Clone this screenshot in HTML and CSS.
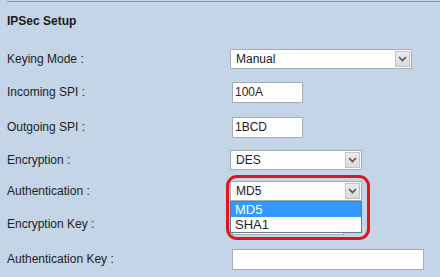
FILE: index.html
```html
<!DOCTYPE html>
<html lang="en">
<head>
  <meta charset="UTF-8" />
  <title>IPSec Setup</title>
  <link rel="stylesheet" href="styles.css">
</head>
<body>
  <div class="panel">
    <h3 class="title">IPSec Setup</h3>

    <div class="row first">
      <span class="label">Keying Mode :</span>
      <div class="select wide">
        <span class="select-text">Manual</span>
        <span class="select-btn"><svg width="9" height="6" viewBox="0 0 9 6"><path d="M1 1l3.5 3.5L8 1" fill="none" stroke="#555" stroke-width="1.6"/></svg></span>
      </div>
    </div>

    <div class="row">
      <span class="label">Incoming SPI :</span>
      <input class="text short" type="text" value="100A" />
    </div>

    <div class="row gap-lg">
      <span class="label">Outgoing SPI :</span>
      <input class="text short" type="text" value="1BCD" />
    </div>

    <div class="row">
      <span class="label">Encryption :</span>
      <div class="select mid">
        <span class="select-text">DES</span>
        <span class="select-btn"><svg width="9" height="6" viewBox="0 0 9 6"><path d="M1 1l3.5 3.5L8 1" fill="none" stroke="#555" stroke-width="1.6"/></svg></span>
      </div>
    </div>

    <div class="row gap-sm">
      <span class="label">Authentication :</span>
      <div class="field-wrap">
        <div class="select mid">
          <span class="select-text">MD5</span>
          <span class="select-btn"><svg width="9" height="6" viewBox="0 0 9 6"><path d="M1 1l3.5 3.5L8 1" fill="none" stroke="#555" stroke-width="1.6"/></svg></span>
        </div>
        <ul class="dropdown">
          <li class="active">MD5</li>
          <li>SHA1</li>
        </ul>
        <div class="ring"></div>
      </div>
    </div>

    <div class="row">
      <span class="label">Encryption Key :</span>
      <input class="text key" type="text" />
    </div>

    <div class="row gap-lg">
      <span class="label">Authentication Key :</span>
      <input class="text long" type="text" />
    </div>
  </div>
</body>
</html>
```

FILE: styles.css
```css
body {
  margin: 0;
  background: #c3d5e6;
  font-family: "Liberation Sans", Arial, sans-serif;
  font-size: 12px;
  color: #1e1e1e;
}
.panel {
  margin: 1px 0 0 7px;
  border-top: 1px solid #8e9aa6;
  height: 276px;
  overflow: hidden;
}
.title {
  margin: 0;
  padding-top: 12px;
  height: 22px;
  font-size: 12px;
  font-weight: bold;
  color: #1a1a1a;
}
.row {
  display: flex;
  align-items: center;
  height: 22px;
  margin-top: 11px;
}
.row.first { margin-top: 12px; }
.row.gap-lg { margin-top: 13px; }
.row.gap-sm { margin-top: 9px; }
.label {
  width: 223px;
  flex-shrink: 0;
}
.select {
  display: flex;
  height: 18px;
  border: 1px solid #a6adb5;
  background: #fff;
  box-sizing: content-box;
}
.select.wide { width: 180px; }
.select.mid { width: 130px; }
.select-text {
  flex: 1;
  padding-left: 5px;
  line-height: 18px;
  color: #201828;
}
.select-btn {
  width: 15px;
  margin: 1px 1px 1px 0;
  background: linear-gradient(#ececec, #dcdcdc);
  border: 1px solid #c4c4c4;
  box-sizing: border-box;
  display: flex;
  align-items: center;
  justify-content: center;
}
.text {
  margin: 0 0 0 2px;
  height: 21px;
  box-sizing: border-box;
  border: 1px solid #a6adb5;
  background: #fff;
  font-family: inherit;
  font-size: 12px;
  padding: 0 2px;
  color: #1e1e1e;
}
.text.short { width: 71px; }
.text.key { width: 112px; }
.text.long { width: 192px; }
.field-wrap {
  position: relative;
  z-index: 2;
}
.dropdown {
  position: absolute;
  left: 0;
  top: 20px;
  width: 132px;
  margin: 0;
  padding: 0;
  list-style: none;
  background: #fff;
  border: 1px solid #6f7a86;
  box-sizing: border-box;
}
.dropdown li {
  height: 15px;
  line-height: 15px;
  padding-left: 4px;
  font-size: 13px;
}
.dropdown li.active {
  background: #3399ff;
  color: #fff;
}
.ring {
  position: absolute;
  left: -4px;
  top: -6px;
  width: 144px;
  height: 65px;
  box-sizing: border-box;
  border: 3px solid #e0161e;
  border-radius: 11px;
}
```
